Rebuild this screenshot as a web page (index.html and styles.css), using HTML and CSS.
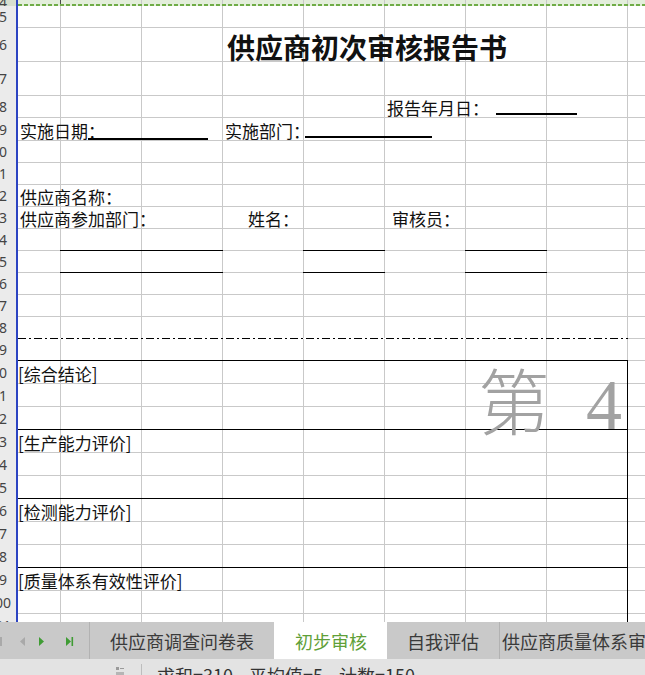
FILE: index.html
```html
<!DOCTYPE html>
<html lang="zh-CN">
<head>
<meta charset="utf-8">
<title>供应商初次审核报告书</title>
<link rel="stylesheet" href="styles.css">
</head>
<body>
<div class="app">
  <main class="sheet">
    <div class="row h6"><div class="rh rh-sel"><span>74</span></div><div class="cells sel"></div></div>
    <div class="row h22"><div class="rh"><span>75</span></div><div class="cells"></div></div>
    <div class="row h34"><div class="rh"><span>76</span></div><div class="cells"><h1 class="title">供应商初次审核报告书</h1></div></div>
    <div class="row h34"><div class="rh"><span>77</span></div><div class="cells"></div></div>
    <div class="row h22"><div class="rh"><span>78</span></div><div class="cells">
      <p class="txt at-f pad-f">报告年月日：<span class="blank b-date"></span></p>
    </div></div>
    <div class="row h23"><div class="rh"><span>79</span></div><div class="cells">
      <p class="txt at-a">实施日期<span class="blank b-start">：</span></p>
      <p class="txt at-d pad-d">实施部门：<span class="blank b-dept"></span></p>
    </div></div>
    <div class="row h22"><div class="rh"><span>80</span></div><div class="cells"></div></div>
    <div class="row h22"><div class="rh"><span>81</span></div><div class="cells"></div></div>
    <div class="row h22"><div class="rh"><span>82</span></div><div class="cells">
      <p class="txt at-a">供应商名称：</p>
    </div></div>
    <div class="row h22"><div class="rh"><span>83</span></div><div class="cells">
      <p class="txt at-a">供应商参加部门：</p>
      <p class="txt at-d pad-name">姓名：</p>
      <p class="txt at-f pad-auditor">审核员：</p>
    </div></div>
    <div class="row h22"><div class="rh"><span>84</span></div><div class="cells fill-lines"></div></div>
    <div class="row h22"><div class="rh"><span>85</span></div><div class="cells fill-lines"></div></div>
    <div class="row h22"><div class="rh"><span>86</span></div><div class="cells"></div></div>
    <div class="row h22"><div class="rh"><span>87</span></div><div class="cells"></div></div>
    <div class="row h22"><div class="rh"><span>88</span></div><div class="cells dash"></div></div>
    <div class="row h22"><div class="rh"><span>89</span></div><div class="cells box-top"></div></div>

    <div class="row h23"><div class="rh"><span>90</span></div><div class="cells box"><p class="txt at-a label">[综合结论]</p></div></div>
    <div class="row h23"><div class="rh"><span>91</span></div><div class="cells box"></div></div>
    <div class="row h23"><div class="rh"><span>92</span></div><div class="cells box-end"></div></div>
    <div class="row h23"><div class="rh"><span>93</span></div><div class="cells box"><p class="txt at-a label">[生产能力评价]</p></div></div>
    <div class="row h23"><div class="rh"><span>94</span></div><div class="cells box"></div></div>
    <div class="row h23"><div class="rh"><span>95</span></div><div class="cells box-end"></div></div>
    <div class="row h23"><div class="rh"><span>96</span></div><div class="cells box"><p class="txt at-a label">[检测能力评价]</p></div></div>
    <div class="row h23"><div class="rh"><span>97</span></div><div class="cells box"></div></div>
    <div class="row h23"><div class="rh"><span>98</span></div><div class="cells box-end"></div></div>
    <div class="row h23"><div class="rh"><span>99</span></div><div class="cells box"><p class="txt at-a label">[质量体系有效性评价]</p></div></div>
    <div class="row h23"><div class="rh"><span>100</span></div><div class="cells box"></div></div>
    <div class="row h23"><div class="rh"><span>101</span></div><div class="cells box"></div></div>

    <div class="page-mark"><span class="pm-cjk">第</span><span class="pm-num">4</span></div>
  </main>

  <nav class="tabs">
    <div class="tab-nav">
      <svg width="89" height="37" viewBox="0 0 89 37">
        <rect x="0" y="15" width="2" height="9" fill="#a9a9a9"/>
        <polygon points="25,15 25,24 20,19.5" fill="#a9a9a9"/>
        <polygon points="39,15 39,24 44,19.5" fill="#3f9c34"/>
        <polygon points="66,15 66,24 71,19.5" fill="#3f9c34"/>
        <rect x="71.5" y="15" width="1.6" height="9" fill="#3f9c34"/>
      </svg>
    </div>
    <div class="tab">供应商调查问卷表</div>
    <div class="tab active">初步审核</div>
    <div class="tab">自我评估</div>
    <div class="tab tab-more">供应商质量体系审核</div>
  </nav>

  <footer class="status">
    <svg class="st-icon" width="8" height="9" viewBox="0 0 8 9">
      <rect x="0" y="0" width="3" height="3" fill="#9a9a9a"/>
      <rect x="4" y="1" width="4" height="1" fill="#9a9a9a"/>
      <rect x="0" y="5" width="8" height="4" fill="#b5b5b5"/>
    </svg>
    <span class="st-sep"></span>
    <div class="st-text"><span>求和=310</span><span>平均值=5</span><span>计数=150</span></div>
  </footer>
</div>
</body>
</html>
```

FILE: styles.css
```css
* {
  box-sizing: border-box;
  margin: 0;
  padding: 0;
}

:root {
  --gl: #c9c9c9;
  --grid-v: linear-gradient(to right, transparent 80px, var(--gl) 80px) 43px 0 / 81px 100% repeat-x;
  --grid-h: linear-gradient(var(--gl), var(--gl)) 0 100% / 100% 1px no-repeat;
  --rule-b: linear-gradient(#000, #000) 0 100% / 610px 1px no-repeat;
  --rule-r: linear-gradient(#000, #000) 609px 0 / 1px 100% no-repeat;
  --dash-b: repeating-linear-gradient(to right, #000 0 8px, #fff 8px 11px, #000 11px 13px, #fff 13px 16px) 0 100% / 610px 1px no-repeat;
  --fill-b: linear-gradient(#000, #000) 42px 100% / 163px 1px no-repeat,
            linear-gradient(#000, #000) 285px 100% / 82px 1px no-repeat,
            linear-gradient(#000, #000) 447px 100% / 82px 1px no-repeat;
}

html,
body {
  width: 645px;
  height: 675px;
  overflow: hidden;
  background: #fff;
}

body {
  font-family: "Noto Sans CJK SC", "Noto Sans", sans-serif;
  color: #111;
}

.app {
  display: flex;
  flex-direction: column;
  height: 675px;
}

/* ---------- worksheet ---------- */

.sheet {
  position: relative;
  flex: none;
  height: 622px;
  overflow: hidden;
}

.row {
  display: flex;
}

.h6 { height: 6px; }
.h22 { height: 22px; }
.h23 { height: 23px; }
.h34 { height: 34px; }

.rh {
  flex: none;
  width: 18px;
  display: flex;
  align-items: center;
  overflow: hidden;
  background: #ebebeb;
  border-right: 2px solid #2c44c2;
  font: 14px/1 "Noto Sans", sans-serif;
  color: #444;
}

.rh span {
  flex: none;
  width: 34px;
  margin-left: -18px;
  text-align: center;
}

.rh-sel {
  background: #d7dfcf;
}

.cells {
  flex: 1;
  min-width: 0;
  display: grid;
  grid-template-columns: 43px repeat(7, 81px) 1fr;
  padding-bottom: 1px;
  background: var(--grid-v), var(--grid-h), #fff;
}

.cells.sel {
  background:
    repeating-linear-gradient(to right, #6fac46 0 4px, transparent 4px 6px) 0 100% / 100% 2px no-repeat,
    linear-gradient(#4a4a4a, #4a4a4a) 42px 0 / 1px 100% no-repeat,
    var(--grid-v),
    #e3eedb;
  padding-bottom: 0;
}

.cells.fill-lines { background: var(--fill-b), var(--grid-v), var(--grid-h), #fff; }
.cells.dash { background: var(--dash-b), var(--grid-v), var(--grid-h), #fff; }
.cells.box-top { background: var(--rule-b), var(--grid-v), var(--grid-h), #fff; }
.cells.box { background: var(--rule-r), var(--grid-v), var(--grid-h), #fff; }
.cells.box-end { background: var(--rule-r), var(--rule-b), var(--grid-v), var(--grid-h), #fff; }

/* cell text */

.txt {
  align-self: end;
  min-width: 0;
  white-space: nowrap;
  font-size: 17px;
  line-height: 18px;
  padding-left: 2px;
}

.at-a { grid-column: 1 / 4; }
.at-d { grid-column: 4 / 6; }
.at-f { grid-column: 6 / -1; }

.pad-d { padding-left: 2px; }
.pad-f { padding-left: 2px; }
.pad-name { padding-left: 25px; }
.pad-auditor { padding-left: 7px; }

.label {
  padding-left: 0;
}

.title {
  grid-column: 4 / -1;
  align-self: end;
  padding-left: 4px;
  font-size: 28px;
  line-height: 28px;
  font-weight: 700;
  white-space: nowrap;
}

.blank {
  display: inline-block;
  vertical-align: baseline;
  height: 18px;
  border-bottom: 2px solid #000;
}

.b-date { width: 81px; margin-left: 7px; }
.b-start { width: 120px; }
.b-dept { width: 127px; margin-left: -5px; }

/* page number watermark drawn over the cells */

.page-mark {
  position: absolute;
  left: 478px;
  top: 362px;
  display: flex;
  align-items: baseline;
  gap: 36px;
  font-size: 72px;
  line-height: 72px;
  color: #a2a2a2;
  pointer-events: none;
}

.pm-cjk {
  font-weight: 300;
}

.pm-num {
  font-family: "Liberation Serif", serif;
}

/* ---------- sheet tabs ---------- */

.tabs {
  flex: none;
  display: flex;
  height: 37px;
  background: #c9c9c9;
  font-size: 18px;
  color: #3a3a3a;
  overflow: hidden;
}

.tab-nav {
  flex: none;
  width: 90px;
  border-right: 1px solid #b2b2b2;
}

.tab-nav svg {
  display: block;
}

.tab {
  flex: none;
  padding: 1px 20px 0;
  line-height: 36px;
  white-space: nowrap;
}

.tab.active {
  background: #fff;
  color: #5f9f38;
  padding-left: 21px;
}

.tab.tab-more {
  border-left: 1px solid #b2b2b2;
  padding-left: 2px;
}

/* ---------- status bar ---------- */

.status {
  flex: none;
  display: flex;
  align-items: flex-start;
  height: 16px;
  padding-left: 116px;
  background: #e3e3e3;
  overflow: hidden;
}

.st-icon {
  flex: none;
  margin-top: 8px;
}

.st-sep {
  flex: none;
  width: 1px;
  height: 12px;
  margin: 5px 0 0 17px;
  background: #bdbdbd;
}

.st-text {
  display: flex;
  gap: 16px;
  margin: 7px 0 0 15px;
  font-size: 18px;
  line-height: 18px;
  color: #333;
  white-space: nowrap;
}
```
